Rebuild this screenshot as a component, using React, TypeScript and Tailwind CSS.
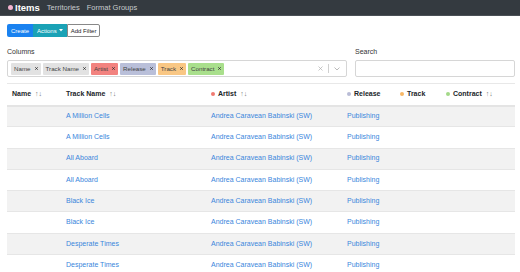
import React from "react";

const font = { fontFamily: '"Liberation Sans", Arial, sans-serif' };

const chips = [
  { label: "Name", cls: "bg-[#e2e2e2]" },
  { label: "Track Name", cls: "bg-[#e2e2e2]" },
  { label: "Artist", cls: "bg-[#f2827f]" },
  { label: "Release", cls: "bg-[#b9bfd9]" },
  { label: "Track", cls: "bg-[#f9c784]" },
  { label: "Contract", cls: "bg-[#a9df8c]" },
];

const rows = [
  "A Million Cells",
  "A Million Cells",
  "All Aboard",
  "All Aboard",
  "Black Ice",
  "Black Ice",
  "Desperate Times",
  "Desperate Times",
];

function Sort() {
  return <span className="ml-[4px] font-normal text-[#777] text-[7px]">↑↓</span>;
}

function Dot({ c }: { c: string }) {
  return <span className={`inline-block w-[4px] h-[4px] rounded-full mr-[3px] align-middle ${c}`} />;
}

export default function App() {
  return (
    <div className="w-[520px] h-[272px] overflow-hidden bg-white text-[#212529]" style={font}>
      <nav className="h-[16px] bg-[#343a40] border-b border-[#4a5056] flex items-center pl-[8px] gap-[7px]">
        <div className="flex items-center gap-[2px]">
          <span className="w-[5px] h-[5px] rounded-full bg-[#f4b3cf]" />
          <span className="text-white font-bold text-[9.5px] leading-none">Items</span>
        </div>
        <span className="text-[#c8cbce] text-[7.5px] leading-none">Territories</span>
        <span className="text-[#c8cbce] text-[7.5px] leading-none">Format Groups</span>
      </nav>
      <div className="pl-[7px] pr-[5px] pt-[8px]">
        <div className="flex h-[13px] text-[6px] leading-none">
          <div className="bg-[#1a82f0] text-white flex items-center px-[4px] rounded-l-[2px]">Create</div>
          <div className="bg-[#1aa2b6] text-white flex items-center px-[4px] gap-[2px]">
            Actions
            <svg width="4" height="3" viewBox="0 0 4 3"><path d="M0 0 H4 L2 2.5 Z" fill="#fff" /></svg>
          </div>
          <div className="border border-[#888] text-[#222] flex items-center px-[3px] rounded-r-[2px]">Add Filter</div>
        </div>
        <div className="flex gap-[8px] mt-[10px]">
          <div className="w-[340px]">
            <div className="text-[7px] text-[#333] h-[13px]">Columns</div>
            <div className="h-[17px] border border-[#d6d6d6] rounded-[2px] flex items-center pl-[3px] pr-[6px]">
              <div className="flex gap-[2px] flex-1">
                {chips.map((c) => (
                  <span key={c.label} className={`${c.cls} h-[12px] flex items-center px-[3px] gap-[4px] text-[6.2px] text-[#444] rounded-[1px]`}>
                    {c.label}
                    <svg width="3" height="3" viewBox="0 0 3 3"><path d="M0.3 0.3 L2.7 2.7 M2.7 0.3 L0.3 2.7" stroke="#333" strokeWidth="0.9" /></svg>
                  </span>
                ))}
              </div>
              <svg width="5" height="5" viewBox="0 0 5 5"><path d="M0.5 0.5 L4.5 4.5 M4.5 0.5 L0.5 4.5" stroke="#b0b0b0" strokeWidth="0.7" /></svg>
              <span className="w-px h-[9px] bg-[#d0d0d0] mx-[5px]" />
              <svg width="6" height="4" viewBox="0 0 6 4"><path d="M0.5 0.5 L3 3 L5.5 0.5" stroke="#aaa" fill="none" strokeWidth="0.8" /></svg>
            </div>
          </div>
          <div className="flex-1">
            <div className="text-[7px] text-[#333] h-[13px]">Search</div>
            <div className="h-[17px] border border-[#d6d6d6] rounded-[2px]" />
          </div>
        </div>
        <table className="w-full mt-[6px] table-fixed border-collapse text-[7px]">
          <colgroup>
            <col className="w-[54px]" />
            <col className="w-[145px]" />
            <col className="w-[136px]" />
            <col className="w-[53px]" />
            <col className="w-[46px]" />
            <col />
          </colgroup>
          <thead>
            <tr className="h-[22px] border-t border-[#e8e8e8] border-b-2 border-b-[#e4e4e4] font-bold text-left">
              <th className="pl-[5px] font-bold">Name<Sort /></th>
              <th className="pl-[5px] font-bold">Track Name<Sort /></th>
              <th className="pl-[5px] font-bold"><Dot c="bg-[#f07a72]" />Artist<Sort /></th>
              <th className="pl-[5px] font-bold"><Dot c="bg-[#b9bcd6]" />Release</th>
              <th className="pl-[5px] font-bold"><Dot c="bg-[#f8b866]" />Track</th>
              <th className="pl-[5px] font-bold"><Dot c="bg-[#a3d988]" />Contract<Sort /></th>
            </tr>
          </thead>
          <tbody>
            {rows.map((r, i) => (
              <tr key={i} className={`h-[21.3px] border-t border-[#e6e6e6] ${i % 2 === 0 ? "bg-[#f2f2f2]" : "bg-white"}`}>
                <td />
                <td className="pl-[5px] text-[#3a86dc]">{r}</td>
                <td className="pl-[5px] text-[#3a86dc]">Andrea Caravean Babinski (SW)</td>
                <td className="pl-[5px] text-[#3a86dc]">Publishing</td>
                <td />
                <td />
              </tr>
            ))}
          </tbody>
        </table>
      </div>
    </div>
  );
}
